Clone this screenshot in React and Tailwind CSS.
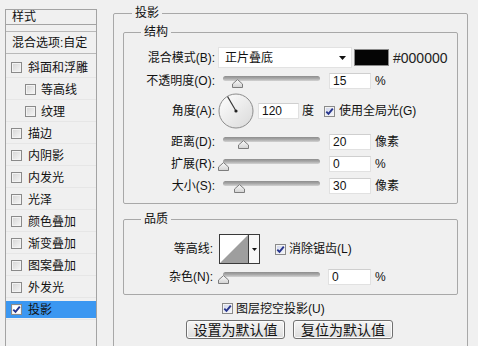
import React from "react";

const CheckMark = () => (
  <svg width="9" height="9" viewBox="0 0 9 9">
    <path d="M1.3 4.6 L3.5 6.9 L7.8 1.6" fill="none" stroke="#26348c" strokeWidth="1.9" />
  </svg>
);

const Box = ({ checked, blue }) => (
  <span
    className={
      "w-[11px] h-[11px] shrink-0 border border-[#8a8a8a] flex items-center justify-center shadow-[inset_0_0_0_1px_#f3f3f3] " +
      (blue
        ? "bg-gradient-to-br from-[#cfd5ea] to-[#f6f7fb]"
        : checked
        ? "bg-white"
        : "bg-gradient-to-br from-[#d4d4d4] to-[#f7f7f7]")
    }
  >
    {checked && <CheckMark />}
  </span>
);

const Thumb = () => (
  <svg width="11" height="9" viewBox="0 0 11 9">
    <defs>
      <linearGradient id="tg" x1="0" y1="0" x2="0" y2="1">
        <stop offset="0" stopColor="#fbfbfb" />
        <stop offset="1" stopColor="#d2d2d2" />
      </linearGradient>
    </defs>
    <path d="M5.5 0.6 L10.5 5 L10.5 8.5 L0.5 8.5 L0.5 5 Z" fill="url(#tg)" stroke="#7d7d7d" strokeWidth="1" />
  </svg>
);

const Slider = ({ pos, ml = "ml-[8px]" }) => (
  <div className={"relative w-[97px] h-[16px] shrink-0 " + ml}>
    <div className="absolute left-0 right-0 top-[3px] h-[5px] rounded-full bg-gradient-to-b from-[#8d8d8d] via-[#a9a9a9] to-[#d3d3d3]" />
    <div className="absolute top-[6px] h-[9px] w-[11px]" style={{ left: pos - 5.5 }}>
      <Thumb />
    </div>
  </div>
);

const Input = ({ value, ml = "ml-[9px]", w = "w-[42px]" }) => (
  <div
    className={
      "h-[16px] shrink-0 bg-white border border-[#e1e1e1] border-t-[#cfcfcf] flex items-center pl-[3px] text-[12px] leading-[12px] " +
      w +
      " " +
      ml
    }
  >
    {value}
  </div>
);

const Label = ({ children, w = "w-[91px]" }) => (
  <div className={"shrink-0 text-right text-[12px] leading-[12px] " + w}>{children}</div>
);

const SliderRow = ({ label, pos, value, unit, mt }) => (
  <div className={"flex items-center h-[16px] " + mt}>
    <Label>{label}</Label>
    <Slider pos={pos} />
    <Input value={value} />
    <div className="ml-[4px] text-[12px] leading-[12px]">{unit}</div>
  </div>
);

const items = [
  { t: "斜面和浮雕" },
  { t: "等高线", indent: true },
  { t: "纹理", indent: true },
  { t: "描边" },
  { t: "内阴影" },
  { t: "内发光" },
  { t: "光泽" },
  { t: "颜色叠加" },
  { t: "渐变叠加" },
  { t: "图案叠加" },
  { t: "外发光" },
  { t: "投影", sel: true },
];

export default function App() {
  return (
    <div className="w-[478px] h-[346px] overflow-hidden bg-[#f0f0f0] flex text-[#111] font-['Liberation_Sans','Noto_Sans_CJK_SC',sans-serif]">
      {/* Left list */}
      <div className="ml-[5px] mt-[9px] w-[92px] h-[345px] shrink-0 border-x border-t border-[#a3a3a3] flex flex-col">
        <div className="h-[15px] border-b border-[#a3a3a3] pl-[6px] flex items-center text-[12px] leading-[12px]">
          样式
        </div>
        <div className="h-[6px]" />
        <div className="h-[23px] border-y border-[#b9b9b9] pl-[6px] flex items-center text-[12px] leading-[12px]">
          混合选项:自定
        </div>
        <div className="h-[2px]" />
        {items.map((it) => (
          <div key={it.t} className="h-[22px] pt-[3px] pb-[1px] border-b border-[#e6e6e6]">
            <div
              className={
                "h-full flex items-center " +
                (it.indent ? "pl-[19px] " : "pl-[5px] ") +
                (it.sel ? "bg-[#3b97f1] text-[#111]" : "")
              }
            >
              <Box checked={!!it.sel} />
              <span className={"text-[12px] leading-[12px] " + (it.indent ? "ml-[5px]" : "ml-[6px]")}>{it.t}</span>
            </div>
          </div>
        ))}
      </div>

      {/* Right */}
      <fieldset className="ml-[16px] mt-[7px] w-[355px] h-[360px] shrink-0 border border-[#a8a8a8] rounded-[2px] px-[9px] pt-0">
        <legend className="ml-[9px] px-[3px] text-[12px] leading-[12px]">投影</legend>

        {/* 结构 */}
        <fieldset className="mt-[7px] border border-[#a8a8a8] rounded-[2px] p-0 pb-[9px]">
          <legend className="ml-[17px] px-[3px] text-[12px] leading-[12px]">结构</legend>

          <div className="mt-[9px] flex items-center h-[21px]">
            <Label>混合模式(B):</Label>
            <div className="ml-[3px] w-[134px] h-[21px] bg-white border border-[#e2e2e2] flex items-center pl-[6px] pr-[5px] text-[12px] leading-[12px]">
              <span className="flex-1">正片叠底</span>
              <svg width="7" height="4" viewBox="0 0 7 4">
                <path d="M0 0 L7 0 L3.5 4 Z" fill="#111" />
              </svg>
            </div>
            <div className="ml-[2px] w-[35px] h-[17px] bg-[#050505] border border-[#8a8a8a]" />
            <div className="ml-[4px] text-[14px] leading-[14px] text-[#222]">#000000</div>
          </div>

          <SliderRow label="不透明度(O):" pos={14} value="15" unit="%" mt="mt-[5px]" />

          <div className="mt-[4px] flex items-center h-[36px]">
            <Label>角度(A):</Label>
            <svg className="ml-[3px] shrink-0" width="36" height="36" viewBox="0 0 36 36">
              <defs>
                <linearGradient id="dg" x1="0" y1="0" x2="1" y2="1">
                  <stop offset="0" stopColor="#ffffff" />
                  <stop offset="1" stopColor="#d9d9d9" />
                </linearGradient>
              </defs>
              <circle cx="18" cy="18" r="17" fill="url(#dg)" stroke="#8c8c8c" strokeWidth="1" />
              <line x1="18" y1="18" x2="9.6" y2="3.6" stroke="#333" strokeWidth="1.1" />
              <circle cx="18" cy="18" r="1.6" fill="#222" />
            </svg>
            <Input value="120" ml="ml-[4px]" w="w-[41px]" />
            <div className="ml-[3px] text-[12px] leading-[12px]">度</div>
            <div className="ml-[10px] flex items-center">
              <Box checked blue />
              <span className="ml-[4px] text-[12px] leading-[12px]">使用全局光(G)</span>
            </div>
          </div>

          <SliderRow label="距离(D):" pos={20} value="20" unit="像素" mt="mt-[5px]" />
          <SliderRow label="扩展(R):" pos={0.5} value="0" unit="%" mt="mt-[6px]" />
          <SliderRow label="大小(S):" pos={16} value="30" unit="像素" mt="mt-[6px]" />
        </fieldset>

        {/* 品质 */}
        <fieldset className="mt-[9px] border border-[#a8a8a8] rounded-[2px] p-0 pb-[9px]">
          <legend className="ml-[17px] px-[3px] text-[12px] leading-[12px]">品质</legend>

          <div className="mt-[9px] flex items-center h-[30px]">
            <Label w="w-[89px]">等高线:</Label>
            <div className="ml-[6px] w-[41px] h-[30px] border border-[#3a3a3a] flex bg-white shrink-0">
              <svg width="28" height="28" viewBox="0 0 28 28" className="shrink-0">
                <path d="M0 28 L28 0 L28 28 Z" fill="#9e9e9e" />
              </svg>
              <div className="flex-1 border-l border-[#3a3a3a] flex items-center justify-center bg-[#f7f7f7]">
                <svg width="5" height="3" viewBox="0 0 5 3">
                  <path d="M0 0 L5 0 L2.5 3 Z" fill="#111" />
                </svg>
              </div>
            </div>
            <div className="ml-[15px] flex items-center">
              <Box checked blue />
              <span className="ml-[3px] text-[12px] leading-[12px]">消除锯齿(L)</span>
            </div>
          </div>

          <div className="mt-[5px] flex items-center h-[16px]">
            <Label w="w-[89px]">杂色(N):</Label>
            <Slider pos={0.5} ml="ml-[10px]" />
            <Input value="0" ml="ml-[8px]" w="w-[43px]" />
            <div className="ml-[4px] text-[12px] leading-[12px]">%</div>
          </div>
        </fieldset>

        <div className="mt-[7px] h-[13px] flex items-center pl-[99px]">
          <Box checked blue />
          <span className="ml-[3px] text-[12px] leading-[12px]">图层挖空投影(U)</span>
        </div>

        <div className="mt-[5px] flex pl-[63px] gap-[8px]">
          <button className="w-[99px] h-[19px] border border-[#707070] rounded-[3px] bg-gradient-to-b from-[#f6f6f6] to-[#dcdcdc] shadow-[inset_0_0_0_1px_#fbfbfb] text-[14px] leading-[14px] flex items-center justify-center">
            设置为默认值
          </button>
          <button className="w-[100px] h-[19px] border border-[#707070] rounded-[3px] bg-gradient-to-b from-[#f6f6f6] to-[#dcdcdc] shadow-[inset_0_0_0_1px_#fbfbfb] text-[14px] leading-[14px] flex items-center justify-center">
            复位为默认值
          </button>
        </div>
      </fieldset>
    </div>
  );
}
